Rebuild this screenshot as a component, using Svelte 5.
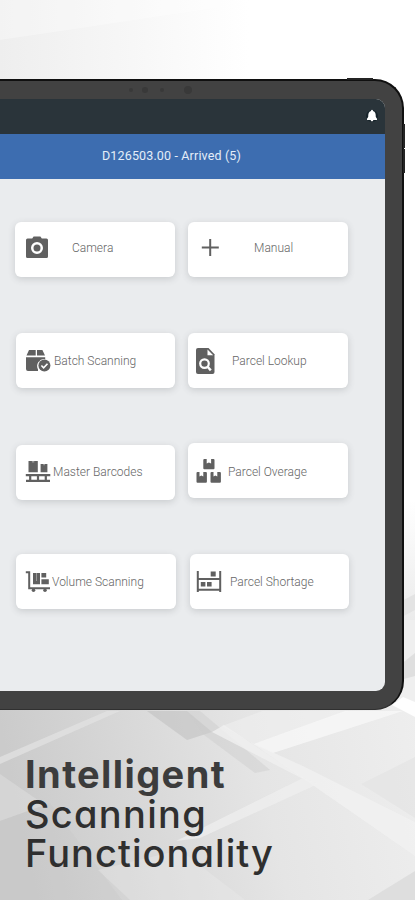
<script>
    const tiles = [
        { icon: 'camera', label: 'Camera' },
        { icon: 'plus', label: 'Manual' },
        { icon: 'batch', label: 'Batch Scanning' },
        { icon: 'lookup', label: 'Parcel Lookup' },
        { icon: 'pallet', label: 'Master Barcodes' },
        { icon: 'boxes', label: 'Parcel Overage' },
        { icon: 'cart', label: 'Volume Scanning' },
        { icon: 'shelf', label: 'Parcel Shortage' }
    ];
</script>

<main class="promo">
    <svg class="backdrop" viewBox="0 0 415 900" aria-hidden="true">
        <defs>
            <linearGradient id="top" x1="0" x2="1">
                <stop offset="0" stop-color="#eee" />
                <stop offset="0.6" stop-color="#fff" />
            </linearGradient>
            <linearGradient id="floor" x1="0" x2="1" y1="0.1" y2="0">
                <stop offset="0" stop-color="#cbcbcb" />
                <stop offset="0.3" stop-color="#d8d8d8" />
                <stop offset="0.6" stop-color="#e5e5e5" />
                <stop offset="1" stop-color="#eee" />
            </linearGradient>
            <linearGradient id="side" x1="0" x2="0" y1="0" y2="1">
                <stop offset="0" stop-color="#fff" />
                <stop offset="1" stop-color="#ebebeb" />
            </linearGradient>
        </defs>
        <rect width="415" height="900" fill="#fff" />
        <rect width="415" height="120" fill="url(#top)" />
        <path d="M0 0H270L0 40z" fill="#fff" opacity=".3" />
        <rect x="380" y="500" width="35" height="120" fill="url(#side)" />
        <rect x="380" y="620" width="35" height="100" fill="#efefef" />
        <path d="M400 602l15-8v16l-15 8z" fill="#e3e3e3" />
        <path d="M400 665l15-12v23l-15 4z" fill="#dfdfdf" />
        <rect y="705" width="415" height="195" fill="url(#floor)" />
        <path d="M0 757L107 711H120L0 764z" fill="#e2e2e2" opacity=".75" />
        <path d="M0 774L45 805 0 821z" fill="#e0e0e0" opacity=".5" />
        <path d="M0 821L50 803 122 900H0z" fill="#c5c5c5" opacity=".2" />
        <path d="M98 870L130 900H245L180 850z" fill="#eee" opacity=".3" />
        <path d="M147 711H187L212 732 187 740z" fill="#bcbcbc" opacity=".5" />
        <path d="M187 711H200L270 770 255 773 204 735z" fill="#cdcdcd" opacity=".45" />
        <path d="M222 726L262 711H350L253 744z" fill="#f1f1f1" opacity=".5" />
        <path d="M253 744L345 711H403L273 753z" fill="#f8f8f8" opacity=".8" />
        <path d="M212 732L224 725 305 779 303 779z" fill="#f0f0f0" opacity=".8" />
        <path d="M250 742L305 767 415 822V856L314 786z" fill="#f2f2f2" opacity=".75" />
        <path d="M303 778L318 784 200 838 176 841z" fill="#f0f0f0" opacity=".7" />
        <path d="M361 784L415 757V818z" fill="#e4e4e4" opacity=".75" />
        <path d="M403 697L415 702V717L392 705z" fill="#fff" opacity=".9" />
        <path d="M368 900L415 871V900z" fill="#d9d9d9" opacity=".75" />
    </svg>

    <div class="tablet">
        <span class="power"></span>
        <span class="volume up"></span>
        <span class="volume down"></span>
        <div class="sensors"><i></i><i></i><i></i><i></i></div>

        <div class="screen">
            <div class="status">
                <svg class="bell" viewBox="0 0 12 14">
                    <circle cx="6" cy="7" r="6" fill="#17242b" />
                    <path d="M5 1.4q1-1.2 2 0v.7c2.4.8 2.8 2.6 2.8 6l1.2 1.6v1.2H1V9.7l1.2-1.6c0-3.4.4-5.2 2.8-6zM4.4 10.8h3.2Q6 14 4.4 10.8z" fill="#fff" />
                </svg>
            </div>
            <header><span>D126503.00 - Arrived (5)</span></header>
            <div class="tiles">
                {#each tiles as tile}
                    <button class="tile {tile.icon}">
                        <svg viewBox="0 0 26 26" fill="currentColor" aria-hidden="true">
                            {#if tile.icon === 'camera'}
                                <path fill-rule="evenodd" d="M2.5 3.5H7.2L8.6 1.5H15.4L16.8 3.5H21.5Q23 3.5 23 5V21.5Q23 23 21.5 23H2.5Q1 23 1 21.5V5Q1 3.5 2.5 3.5zM12 7a6 6 0 1 0 0 12a6 6 0 1 0 0-12z" />
                                <circle cx="12" cy="13" r="3.5" />
                            {:else if tile.icon === 'plus'}
                                <path d="M12.2 4h2v7.5h7.6v2h-7.6V21h-2v-7.5H4.8v-2h7.4z" />
                            {:else if tile.icon === 'batch'}
                                <path d="M4 2h6.7v5.5H1.5zM12 2h5.4L20 7.5h-8zM1 9.2h19.2v2A7 7 0 0 0 13 21.4V23H3Q1 23 1 21z" />
                                <circle cx="19.4" cy="17.6" r="6" />
                                <path d="M16.4 17.5l2.2 2.3 3.9-4.1" fill="none" stroke="#fff" stroke-width="1.6" />
                            {:else if tile.icon === 'lookup'}
                                <path d="M3 0h10.5l6 6.2V24q0 2-2 2H3q-2 0-2-2V2q0-2 2-2z" />
                                <path d="M12.5 1.5l5.7 5.7h-5.7z" fill="#fff" />
                                <circle cx="9.5" cy="15.6" r="4.3" fill="none" stroke="#fff" stroke-width="2.2" />
                                <path d="M12.6 18.8l3.2 3.6" stroke="#fff" stroke-width="2.4" />
                            {:else if tile.icon === 'pallet'}
                                <path d="M3.5 2h9.3v11.2H3.5zM15.6 5h6.8v8.2h-6.8zM.8 15h24.5v2.2H.8z" />
                                <path d="M6.9 2h2.4v1.6H6.9zM18.2 5H20v1.2h-1.8z" fill="#999" />
                                <path d="M1 21.8h24M5.2 17v4M13 17v4M20.8 17v4" fill="none" stroke="currentColor" stroke-width="2.2" />
                            {:else if tile.icon === 'boxes'}
                                <path d="M8.3 0h2.4v4.6l2.2-1.1 2.2 1.1V0h2.4q1 0 1 1v8.3q0 1-1 1H8.3q-1 0-1-1V1q0-1 1-1z" />
                                <path d="M1.5 13h2v4.6l1.9-1.1 1.9 1.1V13h2.6q1 0 1 1v8.7q0 1-1 1H1.5q-1 0-1-1V14q0-1 1-1z" />
                                <path d="M15.5 13h2v4.6l1.9-1.1 1.9 1.1V13h2.6q1 0 1 1v8.7q0 1-1 1h-8.4q-1 0-1-1V14q0-1 1-1z" />
                            {:else if tile.icon === 'cart'}
                                <path d="M.8 3.2h3.4v16H25" fill="none" stroke="currentColor" stroke-width="2" />
                                <path d="M8 4h7v11.3H8zM16.4 4h4.8v4.5h-4.8zM16.4 10.2h7.4v5.1h-7.4z" />
                                <path d="M11 4h1v8h-1z" fill="#999" />
                                <circle cx="8.5" cy="21.3" r="1.8" /><circle cx="20" cy="21.3" r="1.8" />
                            {:else}
                                <path d="M1.8 2v21M24.2 2v21M1 10h24M1 20.7h24" fill="none" stroke="currentColor" stroke-width="2" />
                                <path d="M14.7 2.5h5v5h-5zM4.8 13h4.6v4.6H4.8zM11 13h4.6v4.6H11z" />
                            {/if}
                        </svg>
                        <span>{tile.label}</span>
                    </button>
                {/each}
            </div>
        </div>
    </div>

    <h1><strong>Intelligent</strong><span>Scanning</span><span class="last">Functionality</span></h1>
</main>

<style>
    :global(body) { margin: 0; }

    .promo {
        position: relative;
        width: 415px;
        height: 900px;
        overflow: hidden;
        box-sizing: border-box;
        padding-top: 79px;
    }

    .backdrop {
        position: absolute;
        inset: 0;
        width: 415px;
        height: 900px;
    }

    .tablet {
        position: relative;
        box-sizing: border-box;
        width: 404px;
        height: 631px;
        padding: 18px 17px 0 0;
        background: #424242;
        border: solid #101010;
        border-width: 2px 2px 1px 0;
        border-bottom-color: #303030;
        border-radius: 0 29px 29px 0;
    }

    .power, .volume { position: absolute; background: #242424; }
    .power { left: 347px; top: -3px; width: 26px; height: 2px; }
    .volume { right: -3px; width: 2px; height: 24px; }
    .up { top: 43px; }
    .down { top: 68px; }

    .sensors i {
        position: absolute;
        top: 6px;
        left: 142px;
        width: 6px;
        height: 6px;
        border-radius: 50%;
        background: #393939;
    }
    .sensors i:nth-child(1) { left: 129px; top: 7px; width: 4px; height: 4px; }
    .sensors i:nth-child(3) { left: 160px; top: 7px; width: 4px; height: 4px; }
    .sensors i:nth-child(4) { left: 184px; top: 5px; width: 8px; height: 8px; }

    .screen {
        width: 385px;
        height: 592px;
        overflow: hidden;
        background: #eaecee;
        border-radius: 0 9px 9px 0;
        font-family: Roboto, sans-serif;
    }

    .status {
        height: 35px;
        display: flex;
        align-items: center;
        justify-content: flex-end;
        box-sizing: border-box;
        padding-right: 7px;
        background: #2a343a;
    }
    .bell { width: 12px; height: 14px; margin-top: -2px; }

    header {
        display: flex;
        height: 44.5px;
        box-sizing: border-box;
        padding: 13px 0 0 102px;
        background: #3d6db0;
        color: #e4edf8;
        font-size: 12.5px;
        line-height: 17px;
        letter-spacing: 0.15px;
        white-space: nowrap;
    }

    .tiles {
        display: grid;
        grid-template-columns: 160px 160px;
        grid-auto-rows: 55px;
        gap: 55.7px 13px;
        padding: 43.5px 0 0 15px;
    }

    .tile {
        display: flex;
        align-items: center;
        padding: 0 0 3px 10px;
        border: 0;
        border-radius: 6px;
        background: #fff;
        box-shadow: 0 2px 7px rgba(70, 75, 80, 0.2);
        color: #606060;
        font: 300 12px/18px Roboto, sans-serif;
        text-align: left;
        white-space: nowrap;
    }
    .tile svg { flex: none; width: 26px; height: 26px; }
    .tile span { color: #666; }

    .camera span { margin-left: 21px; }
    .plus { padding-left: 9px; }
    .plus span { margin-left: 31px; }
    .batch, .pallet, .cart { margin-left: 1px; padding-left: 9px; }
    .batch, .lookup { padding-top: 1px; padding-bottom: 0; }
    .batch span { margin-left: 3px; }
    .lookup { padding-left: 7px; }
    .lookup span { margin-left: 11px; }
    .pallet { margin-top: 2px; margin-bottom: -2px; padding-bottom: 1px; }
    .pallet span { margin-left: 2px; }
    .boxes { padding: 3px 0 0 8px; }
    .boxes span { margin-left: 6px; }
    .cart { margin-right: -1px; padding: 1px 0 0 9px; }
    .cart span { margin-left: 1px; }
    .shelf { margin: 0 -1px 0 2px; padding: 1px 0 0 6px; }
    .shelf span { margin-left: 8px; }

    h1 {
        position: relative;
        display: flex;
        flex-direction: column;
        align-items: flex-start;
        margin: 45px 0 0 25px;
        color: #2f2f2f;
        font: 400 38px/39.5px Inter, sans-serif;
        font-feature-settings: 'cv11';
        letter-spacing: 1.3px;
    }
    h1 span { font-weight: 450; }
    .last { letter-spacing: 1.05px; }
    strong { font-weight: 700; color: #3c3c3c; letter-spacing: 1.4px; }
</style>
